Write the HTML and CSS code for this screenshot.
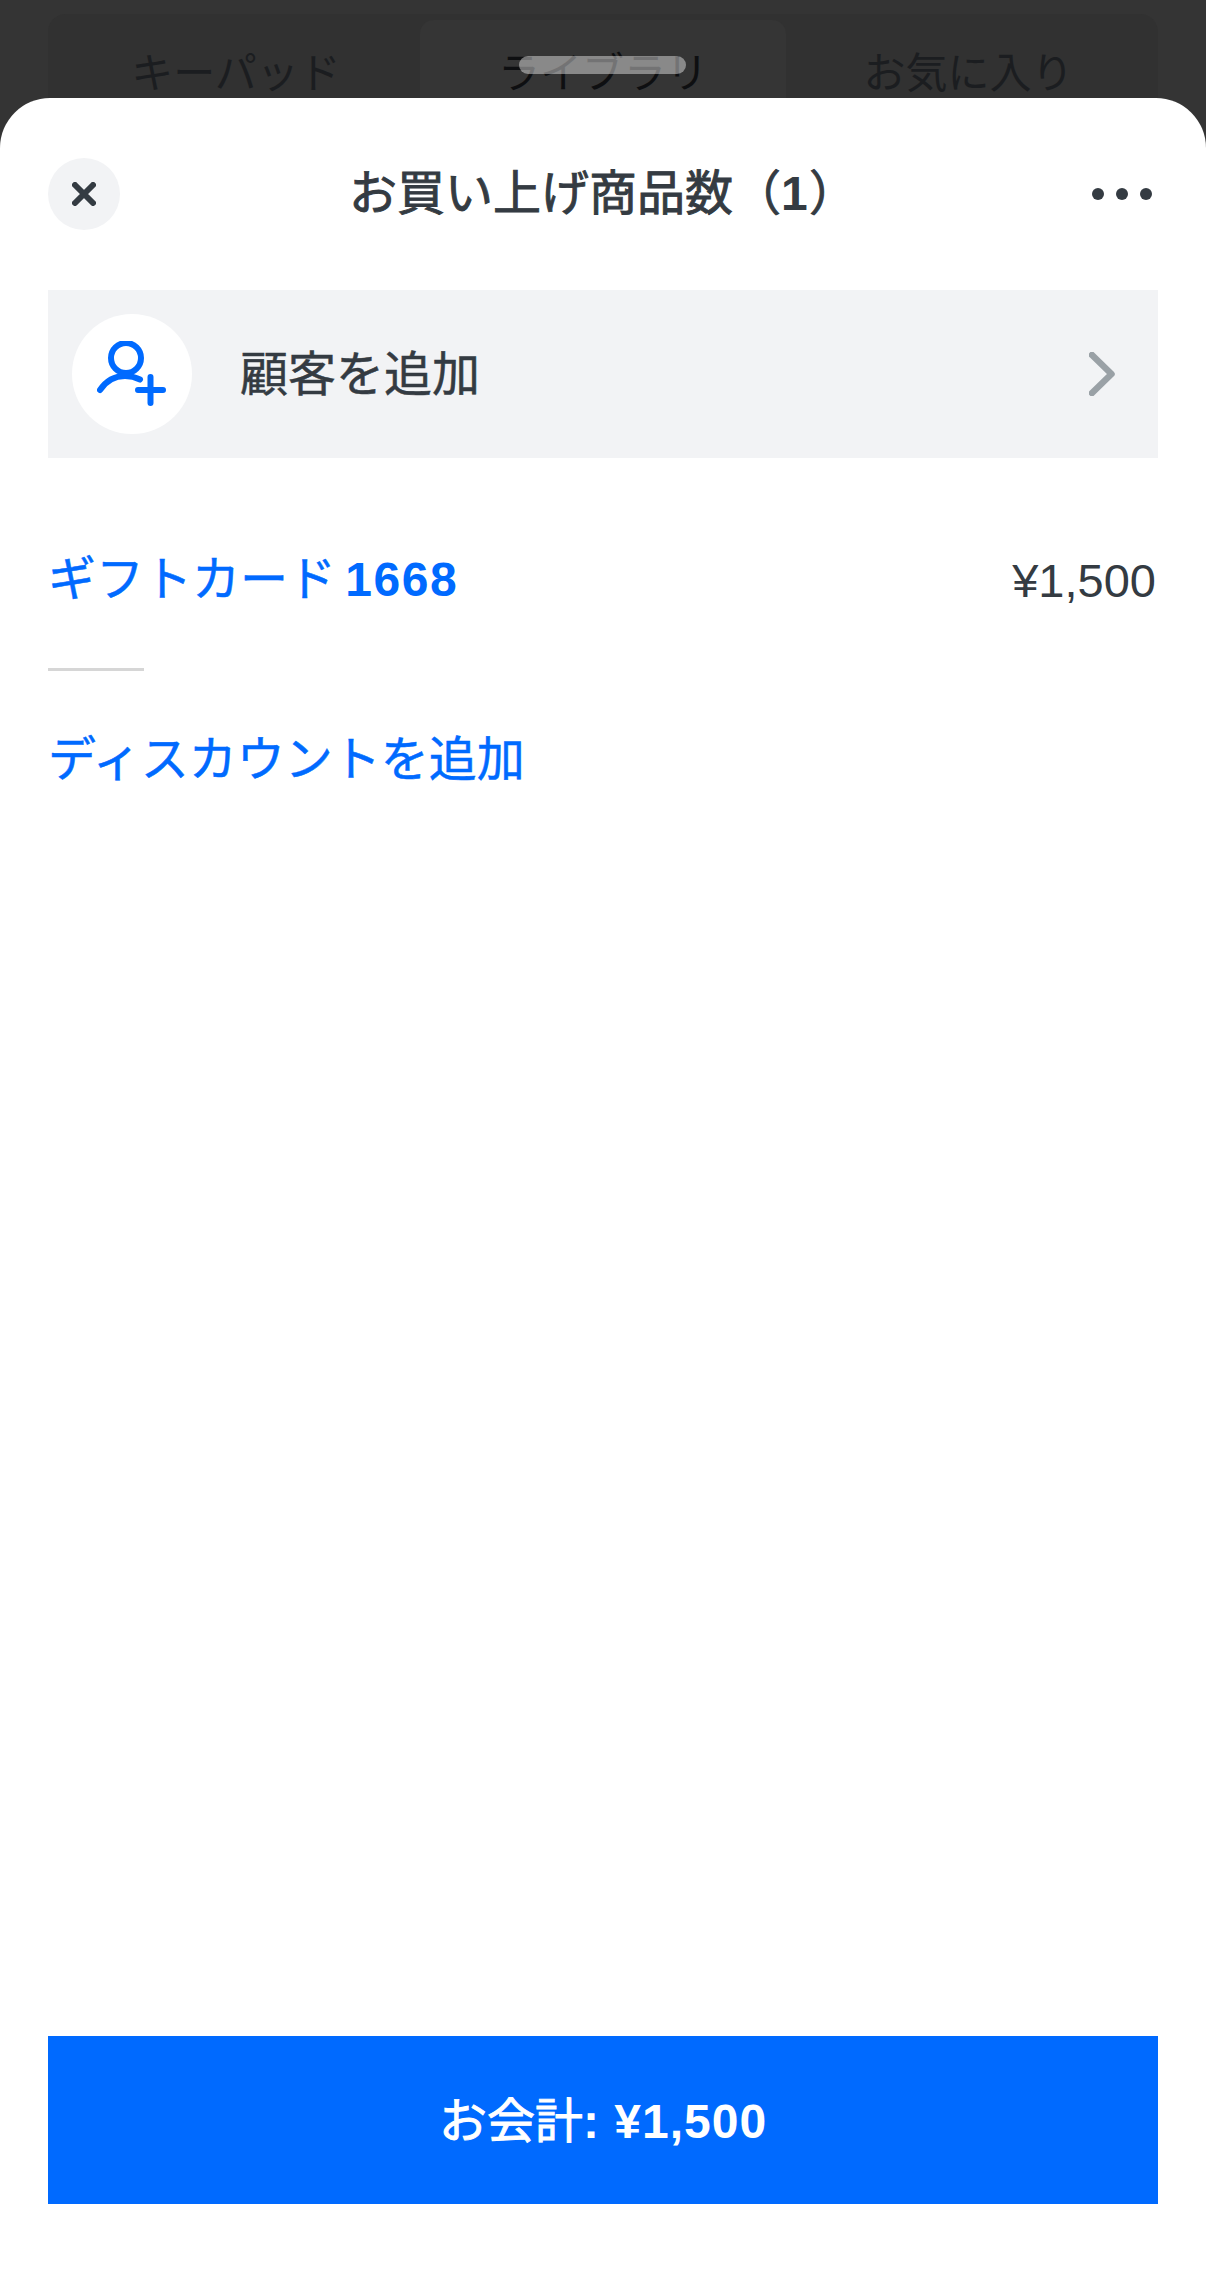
FILE: index.html
```html
<!DOCTYPE html>
<html lang="ja">
<head>
<meta charset="utf-8">
<title>お買い上げ商品数</title>
<link rel="stylesheet" href="styles.css">
</head>
<body>
<div class="backdrop">
  <div class="tabs">
    <div class="tab tab-left">キーパッド</div>
    <div class="tab tab-active">ライブラリ</div>
    <div class="tab tab-right">お気に入り</div>
  </div>
  <div class="handle"></div>
</div>
<main class="sheet">
  <header class="topbar">
    <button class="close" aria-label="閉じる">
      <svg class="close-icon" viewBox="0 0 24 24"><path d="M3 3 21 21M21 3 3 21"/></svg>
    </button>
    <h1 class="title">お買い上げ商品数（<b class="num">1</b>）</h1>
    <div class="more"><i></i><i></i><i></i></div>
  </header>
  <div class="customer">
    <div class="avatar">
      <svg class="avatar-icon" viewBox="0 0 70 66">
        <circle cx="29" cy="17" r="15"/>
        <path d="M3 49C9 40 18 35 28 35C33 35 38 36 43 38.500"/>
        <path d="M53.500 36V62M41 49H66"/>
      </svg>
    </div>
    <span class="customer-label">顧客を追加</span>
    <svg class="chevron" viewBox="0 0 26 44"><path d="M3 3 22.500 22 3 41"/></svg>
  </div>
  <div class="line">
    <span class="link">ギフトカード <b class="num">1668</b></span>
    <span class="price">¥1,500</span>
  </div>
  <div class="divider"></div>
  <div class="discount link">ディスカウントを追加</div>
  <button class="pay">お会計<b class="pay-num">: ¥1,500</b></button>
</main>
</body>
</html>
```
FILE: styles.css
```css
* { box-sizing: border-box; }
html, body { margin: 0; padding: 0; }
body {
  width: 1206px;
  height: 2276px;
  overflow: hidden;
  background: #343434;
  font-family: "Liberation Sans", "Noto Sans CJK JP", sans-serif;
  color: #343b42;
}
.backdrop {
  position: relative;
  height: 98px;
  padding-top: 14px;
  overflow: hidden;
}
.tabs {
  display: grid;
  grid-template-columns: 372px 366px 372px;
  margin: 0 48px;
  height: 120px;
  background: #313131;
  border-radius: 18px;
}
.tab {
  font-size: 42px;
  line-height: 48px;
  padding-top: 36px;
  text-align: center;
  color: #1b1d20;
}
.tab-left { padding-left: 4px; }
.tab-right { padding-right: 7px; }
.tab-active {
  margin-top: 6px;
  padding-top: 30px;
  background: #353535;
  border-radius: 14px;
  color: #0e0f11;
}
.handle {
  position: absolute;
  left: 519px;
  top: 56px;
  width: 167px;
  height: 18px;
  border-radius: 9px;
  background: rgba(255, 255, 255, 0.42);
}
.sheet {
  display: flex;
  flex-direction: column;
  height: 2178px;
  padding: 60px 48px 72px;
  background: #fff;
  border-radius: 50px 50px 0 0;
}
.topbar {
  display: grid;
  grid-template-columns: 72px 1fr 72px;
  align-items: center;
  height: 72px;
}
.close {
  display: flex;
  align-items: center;
  justify-content: center;
  width: 72px;
  height: 72px;
  padding: 0;
  border: 0;
  border-radius: 50%;
  background: #f2f3f5;
}
.close-icon {
  width: 24px;
  height: 24px;
  fill: none;
  stroke: #343b42;
  stroke-width: 6;
  stroke-linecap: round;
}
.title {
  margin: 0;
  font-size: 48px;
  line-height: 60px;
  font-weight: 400;
  -webkit-text-stroke: 0.9px #343b42;
  text-align: center;
  color: #343b42;
}
.num {
  font-weight: 700;
  letter-spacing: 1.500px;
  -webkit-text-stroke: 0;
}
.pay-num {
  font-weight: 700;
  letter-spacing: 1px;
  -webkit-text-stroke: 0;
}
.more {
  display: flex;
  justify-content: flex-end;
  gap: 12px;
  padding-right: 6px;
}
.more i {
  width: 12px;
  height: 12px;
  border-radius: 50%;
  background: #343b42;
}
.customer {
  display: flex;
  align-items: center;
  height: 168px;
  margin-top: 60px;
  padding: 0 43px 0 24px;
  background: #f2f3f5;
}
.avatar {
  display: flex;
  align-items: center;
  justify-content: center;
  width: 120px;
  height: 120px;
  border-radius: 50%;
  background: #fff;
}
.avatar-icon {
  width: 70px;
  height: 66px;
  fill: none;
  stroke: #006aff;
  stroke-width: 6;
  stroke-linecap: round;
}
.customer-label {
  flex: 1;
  margin-left: 48px;
  padding-top: 2px;
  font-size: 48px;
  line-height: 60px;
  color: #343b42;
  -webkit-text-stroke: 0.5px #343b42;
}
.chevron {
  width: 26px;
  height: 44px;
  fill: none;
  stroke: #9aa1a6;
  stroke-width: 6.500;
  stroke-linecap: round;
  stroke-linejoin: round;
}
.line {
  display: flex;
  justify-content: space-between;
  align-items: center;
  margin-top: 92px;
  height: 60px;
}
.link {
  color: #006aff;
  font-size: 48px;
  line-height: 60px;
  word-spacing: -4px;
  -webkit-text-stroke: 0.5px #006aff;
}
.price {
  color: #343b42;
  font-size: 47px;
  padding-right: 2px;
}
.divider {
  width: 96px;
  height: 3px;
  margin-top: 58px;
  background: #d6d6d6;
}
.discount { margin-top: 59px; }
.pay {
  display: block;
  width: 100%;
  height: 168px;
  margin-top: auto;
  padding: 0 0 7px;
  border: 0;
  background: #006aff;
  color: #fff;
  font-family: inherit;
  font-size: 48px;
  font-weight: 400;
  -webkit-text-stroke: 0.9px #fff;
}
```
